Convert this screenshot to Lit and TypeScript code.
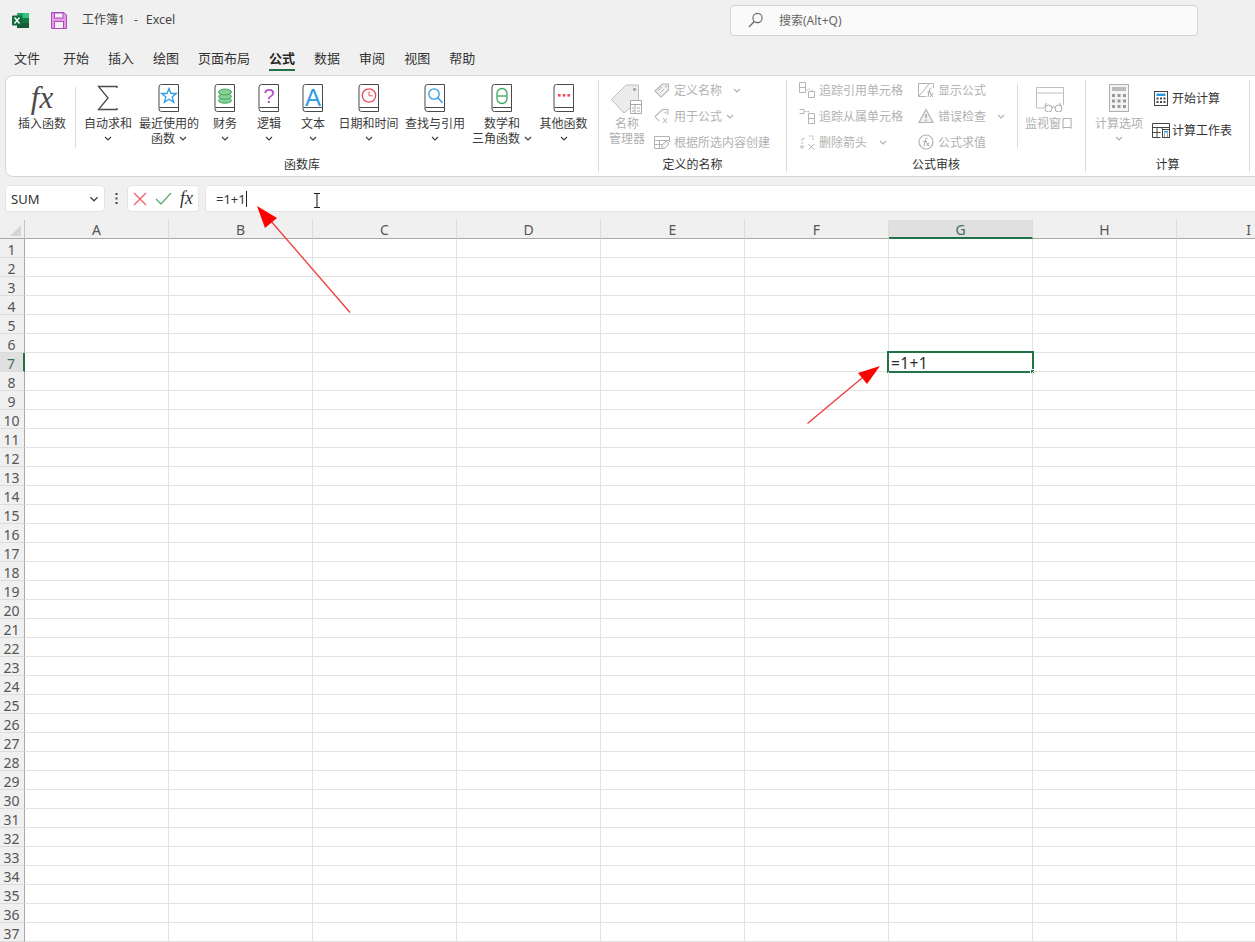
import { LitElement, html, css, svg } from "lit";
import { customElement } from "lit/decorators.js";

const chev = html`<svg class="chev" width="8" height="5" viewBox="0 0 8 5"><path d="M1 1l3 3 3-3" fill="none" stroke="currentColor" stroke-width="1.1"/></svg>`;

const book = (inner: unknown) => html`<svg width="22" height="28" viewBox="0 0 22 28">
  <path d="M3.5.5H20.5V27.5H3.5A2.5 2.5 0 0 1 1 25V3A2.5 2.5 0 0 1 3.5.5Z" fill="#fff" stroke="#4a4a4a"/>
  <path d="M1.5 23.5H20.5" stroke="#4a4a4a"/>${inner}</svg>`;

const BLUE = "#2f9be3", RED = "#ee4a58", GREEN = "#3fa85c", PURPLE = "#b548c6";

const icons: Record<string, unknown> = {
  fx: html`<span class="fx big">fx</span>`,
  sigma: html`<svg width="22" height="28" viewBox="0 0 22 28"><path d="M20 4V2.5H1.5L11 14 1.5 25.5H20V24" fill="none" stroke="#4a4a4a" stroke-width="1.3"/></svg>`,
  star: book(svg`<path d="M11 4.5l2 5h5.3l-4.2 3.4 1.6 5.4-4.7-3.1-4.7 3.1 1.6-5.4-4.2-3.4H9z" fill="none" stroke="${BLUE}" stroke-width="1.3"/>`),
  db: book(svg`<g fill="#86cf95" stroke="${GREEN}"><ellipse cx="11" cy="16.5" rx="6.5" ry="2.7"/><ellipse cx="11" cy="12.5" rx="6.5" ry="2.7"/><ellipse cx="11" cy="8" rx="6.5" ry="2.9"/></g>`),
  q: book(svg`<text x="11" y="19" text-anchor="middle" font-family="Liberation Sans" font-size="20" fill="${PURPLE}">?</text>`),
  a: book(svg`<text x="11" y="22" text-anchor="middle" font-family="Liberation Sans" font-size="24" fill="${BLUE}">A</text>`),
  clock: book(svg`<circle cx="11" cy="11.5" r="6.7" fill="none" stroke="${RED}" stroke-width="1.3"/><path d="M11 7.5v4.3h3.5" fill="none" stroke="${RED}"/>`),
  find: book(svg`<circle cx="10" cy="10" r="5.2" fill="none" stroke="${BLUE}" stroke-width="1.3"/><path d="M13.8 13.8l4.7 5" stroke="${BLUE}" stroke-width="1.6"/>`),
  theta: book(svg`<rect x="6" y="4.5" width="10" height="15" rx="5" fill="none" stroke="${GREEN}" stroke-width="1.3"/><path d="M6 12h10" stroke="${GREEN}" stroke-width="1.3"/>`),
  dots: book(svg`<g fill="${RED}"><rect x="5" y="10" width="2.6" height="2.6"/><rect x="9.7" y="10" width="2.6" height="2.6"/><rect x="14.4" y="10" width="2.6" height="2.6"/></g>`),
  name: html`<svg width="34" height="30" viewBox="0 0 34 30"><path d="M1.5 15.5L16 1H28.5V17L14 29Z" fill="#ececec" stroke="#bdbdbd"/><circle cx="24.5" cy="5.5" r="1.4" fill="#9a9a9a"/><path d="M20.5 16.5H31.5V29.5H20.5ZM20.5 20.5H31.5M25 20.5V29.5M27 24H30M27 27H30M22 24H24M22 27H24" fill="#fff" stroke="#a8a8a8"/></svg>`,
  watch: html`<svg width="32" height="28" viewBox="0 0 32 28"><path d="M11 24H3.5V3.500H30.500V21M3.500 9H30.500" fill="none" stroke="#bdbdbd"/><path d="M19 23.500q1.500-1.500 3 0M11.500 22.500l2-3.500M28.500 22.500l-2-3.500" fill="none" stroke="#a8a8a8"/><circle cx="15.500" cy="24.500" r="3.500" fill="#fff" stroke="#a8a8a8"/><circle cx="25.500" cy="24.500" r="3.500" fill="#fff" stroke="#a8a8a8"/></svg>`,
  calc: html`<svg width="22" height="28" viewBox="0 0 22 28"><rect x="1.500" y=".5" width="19" height="27" fill="#f4f4f4" stroke="#b0b0b0"/><rect x="4" y="3" width="14" height="4" fill="#bdbdbd"/><g fill="#9a9a9a"><rect x="4" y="10" width="3" height="3"/><rect x="9.500" y="10" width="3" height="3"/><rect x="15" y="10" width="3" height="3"/><rect x="4" y="15.500" width="3" height="3"/><rect x="9.500" y="15.500" width="3" height="3"/><rect x="15" y="15.500" width="3" height="3"/><rect x="4" y="21" width="3" height="3"/><rect x="9.500" y="21" width="3" height="3"/><rect x="15" y="21" width="3" height="3"/></g></svg>`,
};

const G = "#b4b4b4";
const small: Record<string, unknown> = {
  define: html`<svg width="16" height="16" viewBox="0 0 16 16"><path d="M1 9L8.500 2H14.500V8L7 15Z" fill="#f2f2f2" stroke="${G}" stroke-width="1.100"/><path d="M4 9l4-4M6 11l4-4" stroke="${G}"/><circle cx="12" cy="4.500" r="1" fill="${G}"/></svg>`,
  use: html`<svg width="16" height="16" viewBox="0 0 16 16"><path d="M1 8.500L8.500 1.500H14V7M5 13L1 8.500" fill="none" stroke="${G}" stroke-width="1.100"/><circle cx="11.500" cy="4.500" r="1" fill="${G}"/><path d="M9 10l4 5M13 10l-4 5" stroke="${G}"/></svg>`,
  create: html`<svg width="16" height="16" viewBox="0 0 16 16"><path d="M.5 2.500H15.500V8M8 14.500H.5V2.500M.5 6.500H15.500M5.500 6.500V14.500M.5 10.500H8" fill="none" stroke="${G}"/><path d="M8 11l4-4 3 3-4 4.500H8Z" fill="#f2f2f2" stroke="${G}"/></svg>`,
  trace1: html`<svg width="16" height="16" viewBox="0 0 16 16"><path d="M.5 .5H6.500V10.500H.5ZM.5 5.500H6.500M9.500 9.500H15.500V15.500H9.500Z" fill="none" stroke="${G}"/><path d="M7.500 8H10V6M13 9V6.500" fill="none" stroke="${G}" stroke-dasharray="1.500 1"/></svg>`,
  trace2: html`<svg width="16" height="16" viewBox="0 0 16 16"><path d="M.5 1.500H5V5.500H.5M9.500 5.500H15.500V15.500H9.500ZM9.500 10.500H15.500" fill="none" stroke="${G}"/><path d="M6 3.500H10V5" fill="none" stroke="${G}" stroke-dasharray="1.500 1"/></svg>`,
  remove: html`<svg width="16" height="16" viewBox="0 0 16 16"><path d="M3 13V4.500H6.500M10 2H14V6" fill="none" stroke="${G}" stroke-dasharray="2 1"/><path d="M1 12l2 2.500 2-2.500M9.500 10l5.500 5.500M15 10l-5.500 5.500" fill="none" stroke="${G}"/></svg>`,
  show: html`<svg width="16" height="16" viewBox="0 0 16 16"><path d="M8 14.500H.5V1.500H15.500V6M1 14L11 2" fill="none" stroke="${G}"/><path d="M10 15l1.500-7.500q.3-1.500 2-1.500M9.500 10H13M12 11l3 4M15 11l-3 4" fill="none" stroke="#a4a4a4"/></svg>`,
  error: html`<svg width="16" height="16" viewBox="0 0 16 16"><path d="M8 1.500L15 14.500H1Z" fill="#f0f0f0" stroke="${G}" stroke-width="1.200"/><path d="M8 6v4M8 11.500v1.500" stroke="#999" stroke-width="1.300"/></svg>`,
  evalf: html`<svg width="16" height="16" viewBox="0 0 16 16"><circle cx="8" cy="8" r="7" fill="none" stroke="${G}" stroke-width="1.200"/><path d="M6 12.500l1.500-7q.3-1.500 2-1.500M5.500 7.500H9M8.500 8.500l2.500 3.500M11 8.500l-2.500 3.500" fill="none" stroke="#a4a4a4"/></svg>`,
  start: html`<svg width="14" height="15" viewBox="0 0 14 15"><rect x=".5" y=".5" width="13" height="14" fill="#fff" stroke="#444"/><rect x="2.500" y="2.500" width="9" height="2.500" fill="#2f9be3"/><g fill="#444"><rect x="2.500" y="6.500" width="2" height="2"/><rect x="6" y="6.500" width="2" height="2"/><rect x="9.500" y="6.500" width="2" height="2"/><rect x="2.500" y="10" width="2" height="2"/><rect x="6" y="10" width="2" height="2"/><rect x="9.500" y="10" width="2" height="2"/></g></svg>`,
  sheet: html`<svg width="18" height="15" viewBox="0 0 18 15"><path d="M8.500 14.500H.5V.5H17.500V6M.5 4.500H17.500M5 4.500V14.500M.5 9.500H8.500M10 4.500V6" fill="none" stroke="#444"/><rect x="10.500" y="6.500" width="7" height="8" fill="#fff" stroke="#444"/><rect x="12" y="8" width="4" height="1.500" fill="#2f9be3"/><path d="M12 11h1M15 11h1M12 13h1M15 13h1" stroke="#444"/></svg>`,
};

type Lg = { w: number; icon: string; lines: string[]; chev?: "own" | "inline"; off?: boolean };
const fnButtons: Lg[] = [
  { w: 56, icon: "sigma", lines: ["自动求和"], chev: "own" },
  { w: 66, icon: "star", lines: ["最近使用的", "函数"], chev: "inline" },
  { w: 46, icon: "db", lines: ["财务"], chev: "own" },
  { w: 42, icon: "q", lines: ["逻辑"], chev: "own" },
  { w: 46, icon: "a", lines: ["文本"], chev: "own" },
  { w: 65, icon: "clock", lines: ["日期和时间"], chev: "own" },
  { w: 68, icon: "find", lines: ["查找与引用"], chev: "own" },
  { w: 66, icon: "theta", lines: ["数学和", "三角函数"], chev: "inline" },
  { w: 57, icon: "dots", lines: ["其他函数"], chev: "own" },
];

const lg = (b: Lg) => html`<div class="lg ${b.off ? "off" : ""}" style="width:${b.w}px">
  <div class="lg-icon">${icons[b.icon]}</div>
  ${b.lines.map((l, i) => html`<div class="lg-line">${l}${b.chev === "inline" && i === b.lines.length - 1 ? html`<span class="in-chev">${chev}</span>` : ""}</div>`)}
  ${b.chev === "own" ? html`<div class="lg-line">${chev}</div>` : ""}
</div>`;

const row = (icon: string, text: string, chevGap?: number, on = false) => html`<div class="row ${on ? "on" : ""}">
  <span class="row-icon">${small[icon]}</span><span>${text}</span>
  ${chevGap !== undefined ? html`<span class="row-chev" style="margin-left:${chevGap}px">${chev}</span>` : ""}
</div>`;

const COLS = ["A", "B", "C", "D", "E", "F", "G", "H", "I"];
const ROWS = Array.from({ length: 37 }, (_, i) => i + 1);
const TABS = ["文件", "开始", "插入", "绘图", "页面布局", "公式", "数据", "审阅", "视图", "帮助"];

@customElement("app-root")
export class AppRoot extends LitElement {
  static styles = css`
    :host { display: block; width: 1255px; height: 942px; position: relative; overflow: hidden; background: #f0f0f0;
      font-family: "Noto Sans", "Noto Sans CJK SC", sans-serif; font-size: 12px; color: #3a3a3a; }
    * { box-sizing: border-box; }
    svg { display: block; }
    .title { height: 40px; display: flex; align-items: center; }
    .xl { margin-left: 12px; }
    .save { margin-left: 22px; }
    .doc { margin-left: 15px; width: 648px; font-size: 12px; color: #444; display: flex; align-items: center; margin-top: -2px; }
    .doc .dash { margin: 0 8px 0 9px; }
    .doc .app { font-size: 12.5px; }
    .search { width: 468px; height: 31px; background: #fafafa; border: 1px solid #d4d4d4; border-radius: 4px;
      display: flex; align-items: center; padding-left: 17px; color: #666; font-size: 12px; gap: 16px; }
    .tabs { height: 35px; display: flex; gap: 19px; padding-left: 14px; font-size: 13px; color: #333; }
    .tab { height: 31px; padding-top: 8px; line-height: 20px; border-bottom: 2px solid transparent; }
    .tab:first-child { margin-right: 4px; }
    .tab.on { font-weight: 700; border-bottom-color: #1f7346; color: #262626; }
    .ribbon { height: 102px; margin-left: 5px; width: 1270px; background: #fff; border: 1px solid #d6d6d6; border-radius: 8px; display: flex; padding-top: 4px; }
    .group { height: 92px; border-right: 1px solid #dcdcdc; display: flex; flex-direction: column; flex: none; }
    .g1 { width: 593px; } .g2 { width: 188px; } .g3 { width: 299px; } .g4 { width: 164px; }
    .content { flex: 1; display: flex; align-items: flex-start; min-height: 0; }
    .g1 .content { padding-left: 6px; }
    .g2 .content { padding-left: 6px; }
    .g3 .content { padding-left: 12px; }
    .g4 .content { padding-left: 3px; }
    .glabel { height: 16px; line-height: 18px; text-align: center; color: #333; }
    .lg { flex: none; margin-top: 4px; display: flex; flex-direction: column; align-items: center; white-space: nowrap; }
    .lg.off { color: #b0b0b0; }
    .lg-icon { height: 28px; margin-bottom: 4px; display: flex; justify-content: center; }
    .lg-line { height: 15px; line-height: 15px; display: flex; align-items: center; justify-content: center; }
    .in-chev { margin-left: 4px; }
    .fx { font-family: "Liberation Serif", serif; font-style: italic; color: #4a4a4a; }
    .fx.big { font-size: 31px; line-height: 28px; }
    .vsep { flex: none; width: 1px; background: #dcdcdc; }
    .s1 { height: 61px; margin: 7px 4px 0 3px; }
    .s2 { height: 64px; margin: 4px 0 0 12px; }
    .stack { display: grid; grid-auto-rows: 20px; row-gap: 6px; flex: none; }
    .st1 { margin-left: 5px; } .st3 { margin-left: 15px; }
    .st4 { margin-left: 3px; row-gap: 12px; padding-top: 8px; }
    .row { display: flex; align-items: center; color: #b2b2b2; white-space: nowrap; }
    .row.on { color: #333; }
    .row-icon { width: 16px; margin-right: 4px; display: flex; justify-content: center; flex: none; }
    .st4 .row-icon { width: 18px; margin-right: 2px; }
    .row-chev { display: block; }
    .fbar { height: 43px; padding: 8px 0 8px 5px; display: flex; }
    .box { background: #fff; border: 1px solid #e4e4e4; border-radius: 4px; display: flex; align-items: center; flex: none; }
    .namebox { width: 100px; padding: 0 5px 0 5px; justify-content: space-between; font-size: 13px; color: #333; }
    .namebox .chev { width: 10px; height: 6px; color: #444; }
    .dots { width: 22px; display: flex; align-items: center; justify-content: center; flex: none; }
    .fbtns { width: 72px; padding: 0 4px 0 5px; justify-content: space-between; }
    .fbtns .fx { font-size: 18px; width: 14px; color: #333; }
    .finput { flex: 1; margin: 0 -8px 0 6px; padding-left: 10px; font-size: 13px; color: #333; }
    .caret { width: 1px; height: 16px; background: #222; }
    .sheet { display: grid; grid-template-columns: 25px repeat(9, 144px); grid-auto-rows: 19px; background: #fff; width: 1321px; }
    .corner { background: #f0f0f0; border-right: 1px solid #c4c4c4; border-bottom: 1px solid #a8a8a8; padding: 5px 0 0 10px; }
    .ch { background: #f0f0f0; border-right: 1px solid #dcdcdc; border-bottom: 1px solid #a8a8a8; text-align: center; font-size: 14px; line-height: 20px; color: #555; }
    .ch.sel { background: #e0e0e0; border-bottom: 2px solid #1f7346; color: #44705a; }
    .rh { background: #f0f0f0; border-right: 1px solid #a8a8a8; border-bottom: 1px solid #dcdcdc; text-align: center; font-size: 14px; line-height: 21px; padding-right: 1px; color: #555; }
    .rh.sel { background: #e0e0e0; border-right: 2px solid #1f7346; color: #44705a; }
    .cell { border-right: 1px solid #e2e2e2; border-bottom: 1px solid #e2e2e2; position: relative; }
    .active { position: absolute; left: -2px; top: -2px; right: -2px; bottom: -2px; border: 2px solid #1f7346; padding-left: 2px; font-size: 15.5px; line-height: 21px; letter-spacing: .4px; color: #2a2a2a; white-space: nowrap; }
    .handle { position: absolute; right: -3px; bottom: -3px; background: #1f7346; border: 1px solid #fff; box-sizing: content-box; width: 3px; height: 3px; }
    .overlay { position: absolute; left: 0; top: 0; pointer-events: none; }
  `;

  render() {
    return html`
      <div class="title">
        <svg class="xl" width="17" height="17" viewBox="0 0 17 17">
          <rect x="5" y="1" width="12" height="15" rx="1" fill="#21a366"/><rect x="11" y="1" width="6" height="5" fill="#33c481"/><rect x="5" y="6" width="12" height="5" fill="#107c41"/><rect x="5" y="11" width="12" height="5" fill="#185c37"/>
          <rect x="0" y="3.500" width="10" height="10" rx="1" fill="#0f6b3a"/>
          <path d="M2.500 5.500l5 6M7.500 5.500l-5 6" stroke="#fff" stroke-width="1.400"/>
        </svg>
        <svg class="save" width="16" height="17" viewBox="0 0 16 17">
          <path d="M.5.5H13L15.500 3V16.500H.5Z" fill="#e59ae3" stroke="#a84cc0"/>
          <rect x="3.500" y="1" width="8.500" height="5" fill="#f4f0f4" stroke="#a84cc0"/>
          <rect x="3.500" y="9.500" width="9" height="7" fill="#f4f0f4" stroke="#a84cc0"/>
        </svg>
        <div class="doc"><span>工作簿1</span><span class="dash">-</span><span class="app">Excel</span></div>
        <div class="search">
          <svg width="15" height="16" viewBox="0 0 15 16"><circle cx="9.500" cy="6" r="4.600" fill="none" stroke="#666" stroke-width="1.100"/><path d="M6.200 9.500L1 15" stroke="#666" stroke-width="1.200"/></svg>
          <span>搜索(Alt+Q)</span>
        </div>
      </div>
      <div class="tabs">${TABS.map((t) => html`<div class="tab ${t === "公式" ? "on" : ""}">${t}</div>`)}</div>
      <div class="ribbon">
        <div class="group g1">
          <div class="content">
            ${lg({ w: 60, icon: "fx", lines: ["插入函数"] })}
            <div class="vsep s1"></div>
            ${fnButtons.map(lg)}
          </div>
          <div class="glabel">函数库</div>
        </div>
        <div class="group g2">
          <div class="content">
            ${lg({ w: 44, icon: "name", lines: ["名称", "管理器"], off: true })}
            <div class="stack st1">
              ${row("define", "定义名称", 11)}
              ${row("use", "用于公式", 4)}
              ${row("create", "根据所选内容创建")}
            </div>
          </div>
          <div class="glabel">定义的名称</div>
        </div>
        <div class="group g3">
          <div class="content">
            <div class="stack">
              ${row("trace1", "追踪引用单元格")}
              ${row("trace2", "追踪从属单元格")}
              ${row("remove", "删除箭头", 12)}
            </div>
            <div class="stack st3">
              ${row("show", "显示公式")}
              ${row("error", "错误检查", 11)}
              ${row("evalf", "公式求值")}
            </div>
            <div class="vsep s2"></div>
            ${lg({ w: 62, icon: "watch", lines: ["监视窗口"], off: true })}
          </div>
          <div class="glabel">公式审核</div>
        </div>
        <div class="group g4">
          <div class="content">
            ${lg({ w: 60, icon: "calc", lines: ["计算选项"], chev: "own", off: true })}
            <div class="stack st4">
              ${row("start", "开始计算", undefined, true)}
              ${row("sheet", "计算工作表", undefined, true)}
            </div>
          </div>
          <div class="glabel">计算</div>
        </div>
      </div>
      <div class="fbar">
        <div class="box namebox"><span>SUM</span>${chev}</div>
        <div class="dots"><svg width="3" height="11" viewBox="0 0 3 11"><g fill="#444"><rect x=".5" width="2" height="2"/><rect x=".5" y="4.500" width="2" height="2"/><rect x=".5" y="9" width="2" height="2"/></g></svg></div>
        <div class="box fbtns">
          <svg width="14" height="14" viewBox="0 0 14 14"><path d="M1 1l12 12M13 1L1 13" stroke="#ee5f68" stroke-width="1.300"/></svg>
          <svg width="17" height="13" viewBox="0 0 17 13"><path d="M1 7l5 5L16 1" fill="none" stroke="#5fae78" stroke-width="1.300"/></svg>
          <span class="fx">fx</span>
        </div>
        <div class="box finput"><span>=1+1</span><span class="caret"></span></div>
      </div>
      <div class="sheet">
        <div class="corner"><svg width="11" height="11" viewBox="0 0 11 11"><path d="M11 0V11H0Z" fill="#d6d6d6"/></svg></div>
        ${COLS.map((c) => html`<div class="ch ${c === "G" ? "sel" : ""}">${c}</div>`)}
        ${ROWS.map((r) => html`
          <div class="rh ${r === 7 ? "sel" : ""}">${r}</div>
          ${COLS.map((c) => html`<div class="cell">${r === 7 && c === "G" ? html`<div class="active">=1+1<span class="handle"></span></div>` : ""}</div>`)}
        `)}
      </div>
      <svg class="overlay" width="1255" height="942" viewBox="0 0 1255 942">
        <path d="M350 312.500L270 220" stroke="#f03a3a" stroke-width="1.300" fill="none"/>
        <path d="M257 206L277 218L265 228Z" fill="#f00"/>
        <path d="M807.500 423.500L862 378" stroke="#f03a3a" stroke-width="1.300" fill="none"/>
        <path d="M880 366L867 384L858 373Z" fill="#f00"/>
        <path d="M314 193.500H320M317 193.500V207.500M314 207.500H320" stroke="#222" stroke-width="1.100" fill="none"/>
      </svg>
    `;
  }
}
